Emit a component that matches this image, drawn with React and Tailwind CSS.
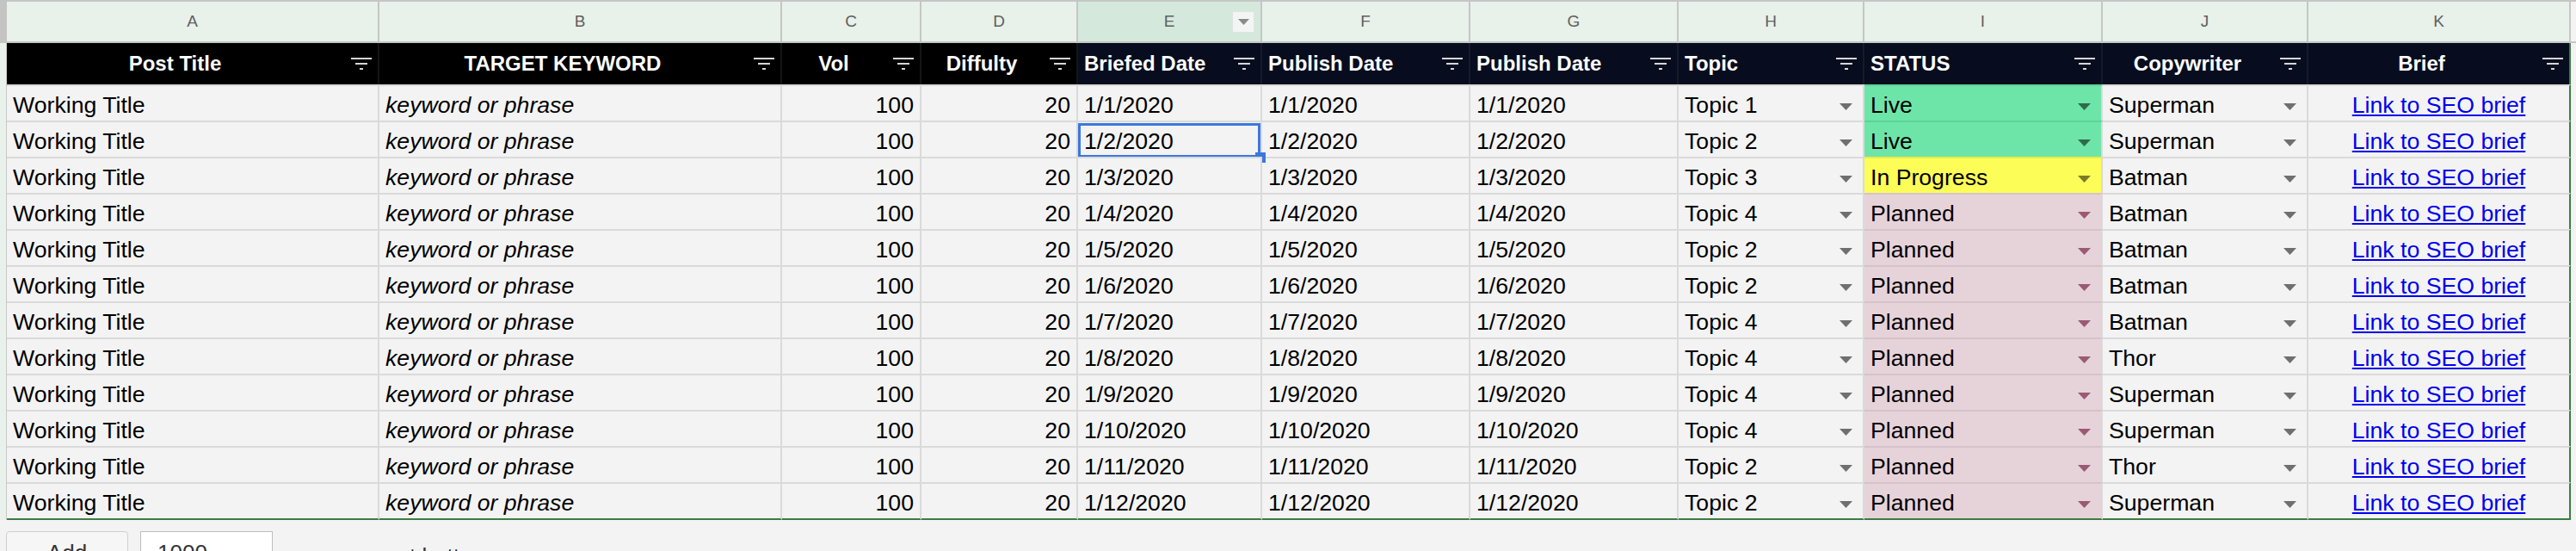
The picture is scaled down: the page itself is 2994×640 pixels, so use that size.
import React from 'react';

const GRID =
  'grid grid-cols-[8px_433px_468px_162px_182px_214px_242px_242px_216px_277px_239px_305px_6px]';

const COLUMNS = [
  { letter: 'A', label: 'Post Title', align: 'center', navy: false },
  { letter: 'B', label: 'TARGET KEYWORD', align: 'center', navy: false },
  { letter: 'C', label: 'Vol', align: 'center', navy: false },
  { letter: 'D', label: 'Diffulty', align: 'center', navy: false },
  { letter: 'E', label: 'Briefed Date', align: 'left', navy: true },
  { letter: 'F', label: 'Publish Date', align: 'left', navy: true },
  { letter: 'G', label: 'Publish Date', align: 'left', navy: true },
  { letter: 'H', label: 'Topic', align: 'left', navy: true },
  { letter: 'I', label: 'STATUS', align: 'left', navy: true },
  { letter: 'J', label: 'Copywriter', align: 'center', navy: true },
  { letter: 'K', label: 'Brief', align: 'center', navy: true },
];

const topics = [1, 2, 3, 4, 2, 2, 4, 4, 4, 4, 2, 2];
const statuses = ['Live', 'Live', 'In Progress', 'Planned', 'Planned', 'Planned', 'Planned', 'Planned', 'Planned', 'Planned', 'Planned', 'Planned'];
const writers = ['Superman', 'Superman', 'Batman', 'Batman', 'Batman', 'Batman', 'Batman', 'Thor', 'Superman', 'Superman', 'Thor', 'Superman'];

const rows = topics.map((t, i) => ({
  title: 'Working Title',
  keyword: 'keyword or phrase',
  vol: 100,
  diff: 20,
  date: `1/${i + 1}/2020`,
  topic: `Topic ${t}`,
  status: statuses[i],
  writer: writers[i],
}));

const STATUS_STYLE = {
  Live: { cell: 'bg-[#6ee5a8] border-t-[#5dd496]', arrow: '#2e6b4b' },
  'In Progress': { cell: 'bg-[#fdfd57] border-t-[#eaea4c]', arrow: '#7a7a28' },
  Planned: { cell: 'bg-[#e6d3da] border-t-[#d6c2ca]', arrow: '#9b5a72' },
};

const FilterIcon = () => (
  <svg width="24" height="14" viewBox="0 0 24 14" fill="#d6d6d6">
    <rect x="0" y="0" width="24" height="2" />
    <rect x="5" y="6" width="14" height="2" />
    <rect x="10" y="12" width="4" height="2" />
  </svg>
);

const Caret = ({ color = '#6f6f6f' }) => (
  <svg width="15" height="8" viewBox="0 0 15 8" className="mb-[9px] ml-auto mr-[5px] shrink-0">
    <path d="M0 0h15L7.5 8z" fill={color} />
  </svg>
);

const cellBase = 'flex items-end pb-[3px] px-[7px] leading-[30px] border-t-2 border-r-2 border-[#dadada] bg-[#f3f3f3] whitespace-nowrap overflow-hidden';

const DataRow = ({ row, index, last }) => {
  const st = STATUS_STYLE[row.status];
  const lastCls = last ? ' border-b-2 border-b-[#3a7d44]' : '';
  return (
    <div className={`${GRID} ${last ? 'h-[44px]' : 'h-[42px]'}`}>
      <div className="bg-[#e9f1eb] border-r border-[#c8c8c8]" />
      <div className={cellBase + lastCls}>{row.title}</div>
      <div className={cellBase + lastCls + ' italic'}>{row.keyword}</div>
      <div className={cellBase + lastCls + ' justify-end'}>{row.vol}</div>
      <div className={cellBase + lastCls + ' justify-end'}>{row.diff}</div>
      <div className={cellBase + lastCls + ' relative overflow-visible'}>
        {row.date}
        {index === 1 && (
          <>
            <div className="absolute left-0 right-0 top-[1px] bottom-[-1px] border-[3px] border-[#3b78de]" />
            <div className="absolute right-[-6px] bottom-[-7px] w-[12px] h-[12px] bg-[#3b78de]" />
          </>
        )}
      </div>
      <div className={cellBase + lastCls}>{row.date}</div>
      <div className={cellBase + lastCls}>{row.date}</div>
      <div className={cellBase + lastCls}>
        <span>{row.topic}</span>
        <Caret />
      </div>
      <div className={`flex items-end pb-[3px] px-[7px] leading-[30px] border-t-2 border-r-2 border-r-[#dadada] whitespace-nowrap ${st.cell}${lastCls}`}>
        <span>{row.status}</span>
        <Caret color={st.arrow} />
      </div>
      <div className={cellBase + lastCls}>
        <span>{row.writer}</span>
        <Caret />
      </div>
      <div className={cellBase + lastCls + ' justify-center border-r-[#3a7d44]'}>
        <a href="#" className="text-[#0000ee] underline decoration-2 underline-offset-[2px]">
          Link to SEO brief
        </a>
      </div>
      <div className="bg-[#f3f3f3]" />
    </div>
  );
};

export default function App() {
  return (
    <div className="w-[2994px] h-[640px] overflow-hidden bg-[#f3f3f3] text-black text-[26.67px] font-['Liberation_Sans',Arial,sans-serif]">
      {/* column letters */}
      <div className={`${GRID} h-[50px]`}>
        <div className="bg-[#c4c4c4] border-y-2 border-[#c4c4c4]" />
        {COLUMNS.map((c) => (
          <div
            key={c.letter}
            className={`relative flex items-center justify-center border-y-2 border-r-2 border-[#c6c6c6] text-[19px] text-[#5f5f5f] ${
              c.letter === 'E' ? 'bg-[#d4e9db]' : 'bg-[#e8f1ea]'
            }`}
          >
            {c.letter}
            {c.letter === 'E' && (
              <div className="absolute right-[7px] top-[11px] w-[26px] h-[25px] flex items-center justify-center bg-[#f2f5f3] border border-[#dfe5e0]">
                <svg width="13" height="7" viewBox="0 0 13 7">
                  <path d="M0 0h13L6.5 7z" fill="#8a8a8a" />
                </svg>
              </div>
            )}
          </div>
        ))}
        <div className="border-y-2 border-[#c6c6c6] bg-[#f3f3f3]" />
      </div>

      {/* header */}
      <div className={`${GRID} h-[48px]`}>
        <div className="bg-[#e9f1eb] border-r border-[#c8c8c8]" />
        {COLUMNS.map((c) => (
          <div
            key={c.letter}
            className={`flex items-center border-r-2 text-white font-bold text-[24px] whitespace-nowrap ${
              c.navy ? 'bg-[#070d1f] border-[#161b29]' : 'bg-black border-[#151515]'
            } ${c.letter === 'K' ? 'border-r-[#3a7d44]' : ''}`}
          >
            <span className={`flex-1 ${c.align === 'center' ? 'text-center' : 'text-left pl-[7px]'}`}>
              {c.label}
            </span>
            <span className="flex w-[40px] justify-end pr-[7px]">
              <FilterIcon />
            </span>
          </div>
        ))}
        <div className="bg-[#f3f3f3]" />
      </div>

      {/* data */}
      {rows.map((row, i) => (
        <DataRow key={i} row={row} index={i} last={i === rows.length - 1} />
      ))}

      {/* add rows */}
      <div className="flex items-start pl-[7px] pt-[13px]">
        <button className="w-[142px] h-[50px] flex items-center justify-center rounded-[4px] border border-[#cfcfcf] bg-[#f6f6f6] text-[26px] text-[#333]">
          Add
        </button>
        <div className="ml-[14px] w-[154px] h-[50px] flex items-center pl-[19px] bg-white border border-[#bdbdbd] text-[26px] text-[#333]">
          1000
        </div>
        <div className="ml-[16px] h-[50px] pt-[8px] flex items-center text-[26px] text-[#333]">
          more rows at bottom.
        </div>
      </div>
    </div>
  );
}
